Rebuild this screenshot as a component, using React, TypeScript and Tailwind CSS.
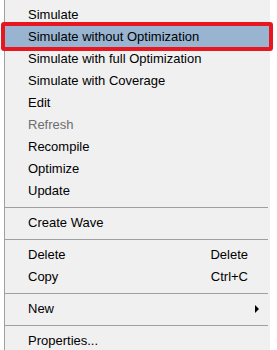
import React from 'react';

type Item = { label?: string; shortcut?: string; disabled?: boolean; submenu?: boolean; active?: boolean; separator?: boolean };

const items: Item[] = [
    { label: 'Simulate' },
    { label: 'Simulate without Optimization', active: true },
    { label: 'Simulate with full Optimization' },
    { label: 'Simulate with Coverage' },
    { label: 'Edit' },
    { label: 'Refresh', disabled: true },
    { label: 'Recompile' },
    { label: 'Optimize' },
    { label: 'Update' },
    { separator: true },
    { label: 'Create Wave' },
    { separator: true },
    { label: 'Delete', shortcut: 'Delete' },
    { label: 'Copy', shortcut: 'Ctrl+C' },
    { separator: true },
    { label: 'New', submenu: true },
    { separator: true },
    { label: 'Properties...' },
];

const App: React.FC = () => {
    return (
        <div className="relative h-[350px] w-[277px] overflow-hidden bg-white font-['Liberation_Sans',Arial,sans-serif] text-[13px] text-black">
            <div className="ml-[4px] w-[266px] border-l border-[#a0a0a0] bg-[#f0f0f0] pt-[4px]">
                {items.map((item, i) =>
                    item.separator ? (
                        <div key={i} className="flex h-[10px] items-center pr-[2px]">
                            <div className="h-px w-full bg-[#a0a0a0]" />
                        </div>
                    ) : (
                        <div
                            key={i}
                            className={`flex h-[22px] items-center pl-[23px] pr-[22px] ${item.active ? 'bg-[#99b4d1]' : ''} ${item.disabled ? 'text-[#6d6d6d]' : ''}`}
                        >
                            <span className="flex-1">{item.label}</span>
                            {item.shortcut && <span>{item.shortcut}</span>}
                            {item.submenu && (
                                <svg width="5" height="8" viewBox="0 0 5 8" className="-mr-[12px]">
                                    <path d="M0 0 L4 4 L0 8 Z" fill="#000" />
                                </svg>
                            )}
                        </div>
                    ),
                )}
            </div>
            {/* red annotation frame round the selected item */}
            <div className="pointer-events-none absolute left-[1px] top-[22px] h-[29px] w-[272px] rounded-[3px] border-4 border-[#e8161e]" />
        </div>
    );
};

export default App;
